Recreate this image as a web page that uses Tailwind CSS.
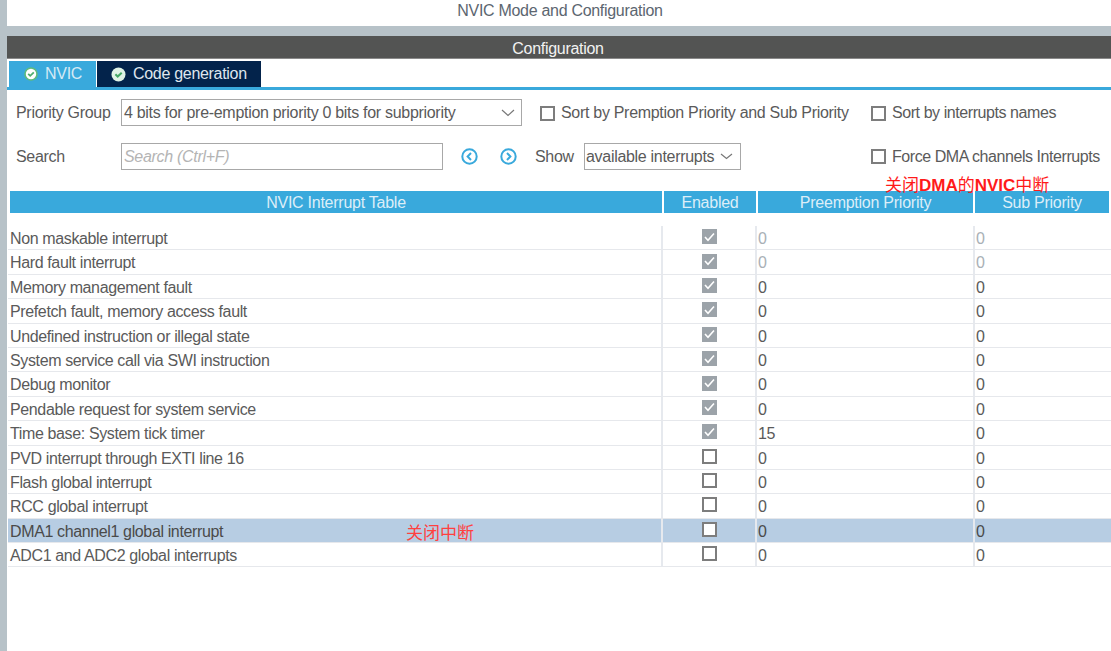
<!DOCTYPE html>
<html>
<head>
  <meta charset="utf-8">
  <script src="https://cdn.jsdelivr.net/npm/@tailwindcss/browser@4"></script>
</head>
<body class="bg-white overflow-hidden">
  <div class="relative flex w-[1111px] h-[651px] font-['Liberation_Sans','Noto_Sans_CJK_SC',sans-serif] text-[16px] tracking-[-0.3px] text-[#5a5a5a]">
    <div class="w-[7px] shrink-0 bg-[#b7c2c8]"></div>

    <div class="flex-1 min-w-0">
      <div class="h-[26px] text-center leading-[21px] text-[#5c6670] pl-[2px]">NVIC Mode and Configuration</div>
      <div class="h-[10px] bg-[#b7c2c8]"></div>
      <div class="h-[23px] bg-[#535453] border-b border-[#8a8a8a] text-center leading-[25px] text-[#f2f2f2] pr-[2px]">Configuration</div>

      <!-- tabs -->
      <div class="flex h-[31px] pt-[2px] pl-[2px] border-b-[3px] border-[#39a9dc]">
        <div class="w-[87px] flex items-center bg-[#39a9dc] text-[#d5eaf5] pl-[15px] gap-[7px]">
          <svg class="w-[14px] h-[14px]" viewBox="0 0 14 14"><circle cx="7" cy="7" r="6" fill="#fff" stroke="#5fbb7c" stroke-width="1.6"/><path d="M4.2 6.8l2 2 3.6-3.4" fill="none" stroke="#4fae6e" stroke-width="1.8"/></svg>
          <span>NVIC</span>
        </div>
        <div class="w-[164px] ml-px flex items-center bg-[#03234b] text-[#dfe6ee] pl-[14px] gap-[7px]">
          <svg class="w-[15px] h-[15px]" viewBox="0 0 15 15"><circle cx="7.5" cy="7.5" r="7" fill="#dff3e6"/><path d="M4.4 7.2l2.3 2.3 4-3.8" fill="none" stroke="#45a866" stroke-width="2"/></svg>
          <span>Code generation</span>
        </div>
      </div>

      <!-- toolbar -->
      <div class="flex items-center h-[44px] pl-[9px] whitespace-nowrap">
        <div class="w-[105px] pt-[2px]">Priority Group</div>
        <div class="w-[401px] h-[27px] flex items-center justify-between border border-[#a8a8a8] pl-[2px] pr-[6px] pt-[2px]">
          <span>4 bits for pre-emption priority 0 bits for subpriority</span>
          <svg class="w-[14px] h-[8px]" viewBox="0 0 14 8"><path d="M1 1l6 5.5L13 1" fill="none" stroke="#777" stroke-width="1.2"/></svg>
        </div>
        <div class="ml-[18px] w-[331px] flex items-center gap-[6px] pt-[2px]">
          <span class="w-[15px] h-[15px] border-2 border-[#7d7d7d] bg-white"></span>
          <span>Sort by Premption Priority and Sub Priority</span>
        </div>
        <div class="flex items-center gap-[6px] pt-[2px] tracking-[-0.43px]">
          <span class="w-[15px] h-[15px] border-2 border-[#7d7d7d] bg-white"></span>
          <span>Sort by interrupts names</span>
        </div>
      </div>
      <div class="flex items-center h-[45px] pl-[9px] whitespace-nowrap">
        <div class="w-[105px]">Search</div>
        <div class="w-[322px] h-[27px] flex items-center border border-[#a8a8a8] pl-[2px] italic text-[#b4b4b4]">Search (Ctrl+F)</div>
        <svg class="ml-[18px] w-[17px] h-[17px]" viewBox="0 0 17 17"><circle cx="8.5" cy="8.5" r="7.2" fill="none" stroke="#39a9dc" stroke-width="2"/><path d="M10 5l-3.4 3.5L10 12" fill="none" stroke="#39a9dc" stroke-width="2"/></svg>
        <svg class="ml-[22px] w-[17px] h-[17px]" viewBox="0 0 17 17"><circle cx="8.5" cy="8.5" r="7.2" fill="none" stroke="#39a9dc" stroke-width="2"/><path d="M7 5l3.4 3.5L7 12" fill="none" stroke="#39a9dc" stroke-width="2"/></svg>
        <div class="ml-[18px] w-[49px]">Show</div>
        <div class="w-[157px] h-[27px] flex items-center border border-[#a8a8a8] pl-[1px] gap-[6px]">
          <span>available interrupts</span>
          <svg class="w-[13px] h-[7px]" viewBox="0 0 13 7"><path d="M1 1l5.5 4.5L12 1" fill="none" stroke="#777" stroke-width="1.2"/></svg>
        </div>
        <div class="ml-[130px] flex items-center gap-[6px] tracking-[-0.44px]">
          <span class="w-[15px] h-[15px] border-2 border-[#7d7d7d] bg-white"></span>
          <span>Force DMA channels Interrupts</span>
        </div>
      </div>

      <!-- table -->
      <div class="mt-[12px] flex h-[22px] pl-[3px] gap-[2px] text-center leading-[23px] text-[#dceef8] tracking-[-0.25px]">
        <div class="w-[652px] bg-[#39a9dc]">NVIC Interrupt Table</div>
        <div class="w-[92px] bg-[#39a9dc]">Enabled</div>
        <div class="w-[215px] bg-[#39a9dc]">Preemption Priority</div>
        <div class="w-[134px] bg-[#39a9dc]">Sub Priority</div>
      </div>
      <div id="rows" class="mt-[13px] pl-px"></div>
    </div>

    <div class="absolute left-[885px] top-[174px] text-[17px] tracking-normal leading-[24px] text-[#ff1a1a]">关闭<b class="font-bold">DMA</b>的<b class="font-bold">NVIC</b>中断</div>
    <div class="absolute left-[406px] top-[522px] text-[17px] tracking-normal leading-[24px] text-[#ff4040]">关闭中断</div>
  </div>

  <script>
    const interrupts = [
      ['Non maskable interrupt', true, '0', '0', true],
      ['Hard fault interrupt', true, '0', '0', true],
      ['Memory management fault', true, '0', '0'],
      ['Prefetch fault, memory access fault', true, '0', '0'],
      ['Undefined instruction or illegal state', true, '0', '0'],
      ['System service call via SWI instruction', true, '0', '0'],
      ['Debug monitor', true, '0', '0'],
      ['Pendable request for system service', true, '0', '0'],
      ['Time base: System tick timer', true, '15', '0'],
      ['PVD interrupt through EXTI line 16', false, '0', '0'],
      ['Flash global interrupt', false, '0', '0'],
      ['RCC global interrupt', false, '0', '0'],
      ['DMA1 channel1 global interrupt', false, '0', '0'],
      ['ADC1 and ADC2 global interrupts', false, '0', '0']
    ];

    const rowsElement = document.getElementById('rows');

    function checkbox(checked) {
      if (checked) {
        return `<span class="w-[15px] h-[15px] flex items-center justify-center bg-[#9ca3a9]">
          <svg class="w-[11px] h-[10px]" viewBox="0 0 11 10"><path d="M1 5l3 3.2L10 1.5" fill="none" stroke="#fff" stroke-width="1.6"/></svg></span>`;
      }
      return '<span class="w-[15px] h-[15px] border-2 border-[#7d7d7d] bg-white"></span>';
    }

    interrupts.forEach(function (item, i) {
      const row = document.createElement('div');
      const selected = item[0].startsWith('DMA1');
      row.className = 'flex h-[24.4px] leading-[25px] tracking-[-0.37px] border-b border-[#e6e8ec] ' + (selected ? 'bg-[#b7cde3] text-[#4a4a4a]' : '');
      const muted = item[4] ? 'text-[#a9b0b6]' : '';
      row.innerHTML = `
        <div class="w-[655px] pl-[2px] border-r-2 border-[#e6e9ee]">${item[0]}</div>
        <div class="w-[94px] flex items-center justify-center border-r-2 border-[#e6e9ee] pb-[2px]">${checkbox(item[1])}</div>
        <div class="w-[218px] pl-px border-r-2 border-[#e6e9ee] ${muted}">${item[2]}</div>
        <div class="w-[134px] pl-px ${muted}">${item[3]}</div>`;
      rowsElement.appendChild(row);
    });
  </script>
</body>
</html>
